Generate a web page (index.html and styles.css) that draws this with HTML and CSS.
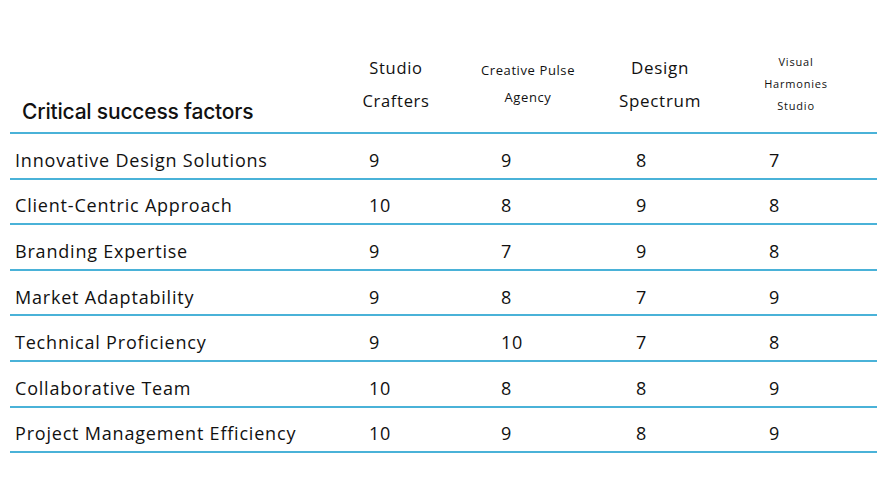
FILE: index.html
```html
<!DOCTYPE html>
<html lang="en">
<head>
<meta charset="utf-8">
<title>Critical success factors</title>
<link rel="stylesheet" href="styles.css">
</head>
<body>
<table class="matrix">
  <colgroup>
    <col class="c-factor">
    <col class="c-score">
    <col class="c-score">
    <col class="c-score">
    <col class="c-last">
  </colgroup>
  <thead>
    <tr>
      <th class="factor-head">Critical success factors</th>
      <th class="h-md">Studio<br>Crafters</th>
      <th class="h-sm">Creative Pulse<br>Agency</th>
      <th class="h-lg">Design<br>Spectrum</th>
      <th class="h-xs">Visual<br>Harmonies<br>Studio</th>
    </tr>
  </thead>
  <tbody>
    <tr><td>Innovative Design Solutions</td><td>9</td><td>9</td><td class="p2">8</td><td class="p3">7</td></tr>
    <tr><td>Client-Centric Approach</td><td>10</td><td>8</td><td class="p2">9</td><td class="p3">8</td></tr>
    <tr><td>Branding Expertise</td><td>9</td><td>7</td><td class="p2">9</td><td class="p3">8</td></tr>
    <tr><td>Market Adaptability</td><td>9</td><td>8</td><td class="p2">7</td><td class="p3">9</td></tr>
    <tr><td>Technical Proficiency</td><td>9</td><td>10</td><td class="p2">7</td><td class="p3">8</td></tr>
    <tr><td>Collaborative Team</td><td>10</td><td>8</td><td class="p2">8</td><td class="p3">9</td></tr>
    <tr><td>Project Management Efficiency</td><td>10</td><td>9</td><td class="p2">8</td><td class="p3">9</td></tr>
  </tbody>
</table>
</body>
</html>
```

FILE: styles.css
```css
html, body {
  margin: 0;
  padding: 0;
  background: #ffffff;
}

body {
  font-family: "Open Sans", "Liberation Sans", sans-serif;
  color: #111111;
}

.matrix {
  margin: 35px 0 0 10px;
  width: 867px;
  border-collapse: collapse;
  table-layout: fixed;
}

.c-factor { width: 331px; }
.c-score { width: 132px; }
.c-last { width: 140px; }

.matrix th {
  font-weight: 400;
  text-align: center;
  vertical-align: middle;
  padding: 0 22px 0 0;
  height: 89px;
  border-bottom: 2px solid #4ab2d8;
  color: #111111;
  white-space: nowrap;
}

.matrix th.factor-head {
  text-align: left;
  vertical-align: bottom;
  padding: 0 0 8px 12px;
  font-family: "Inter", "Liberation Sans", sans-serif;
  font-weight: 500;
  font-size: 21px;
  letter-spacing: -0.2px;
}

.h-md { font-size: 16.5px; line-height: 33px; letter-spacing: 0.7px; }
.h-sm { font-size: 13px; line-height: 27px; letter-spacing: 0.6px; }
.h-lg { font-size: 17px; line-height: 33px; letter-spacing: 0.7px; }
.h-xs { font-size: 11px; line-height: 22px; letter-spacing: 0.8px; }

.matrix td {
  height: 45.6px;
  padding: 8px 0 0 28px;
  box-sizing: border-box;
  border-bottom: 2px solid #4ab2d8;
  font-size: 18px;
  letter-spacing: 0.8px;
  vertical-align: middle;
  white-space: nowrap;
}

.matrix td:first-child {
  padding-left: 5px;
}

.matrix td.p2 { padding-left: 31px; }
.matrix td.p3 { padding-left: 32px; }
```
